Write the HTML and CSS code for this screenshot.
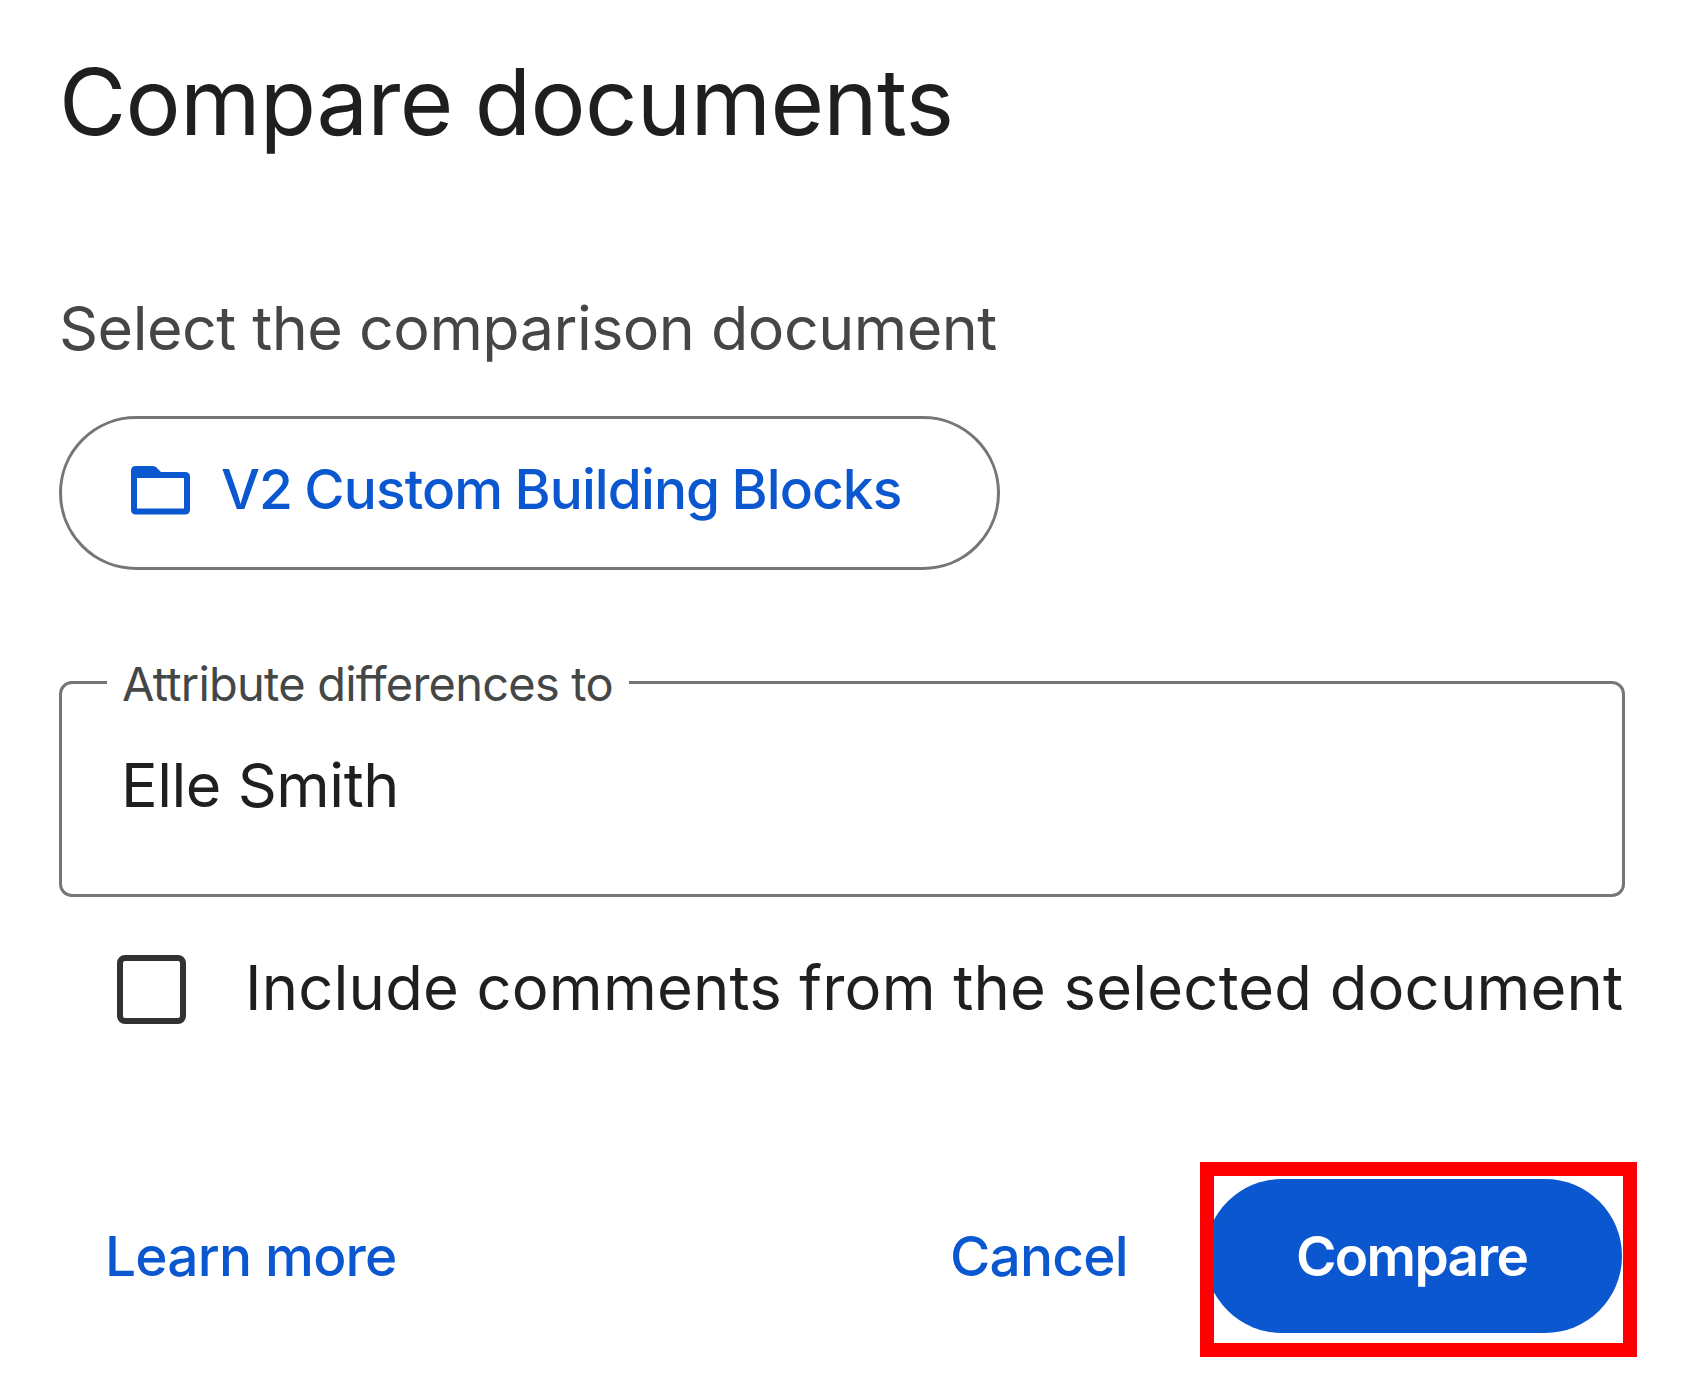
FILE: index.html
```html
<!DOCTYPE html>
<html lang="en">
<head>
<meta charset="utf-8">
<title>Compare documents</title>
<link rel="stylesheet" href="styles.css">
</head>
<body>
<main class="dialog">
  <h1 class="title">Compare documents</h1>
  <p class="prompt">Select the comparison document</p>
  <button class="picker" type="button">
    <svg class="folder" viewBox="0 0 59 49" aria-hidden="true">
      <path fill="currentColor" fill-rule="evenodd" d="M5 0H22Q24 0 25.500 1.500L30 6H54Q59 6 59 11V43.500Q59 48.500 54 48.500H5Q0 48.500 0 43.500V5Q0 0 5 0ZM6 12V42.500H53V12Z"/>
    </svg>
    <span class="picker-name">V2 Custom Building Blocks</span>
  </button>
  <fieldset class="field">
    <legend class="field-label">Attribute differences to</legend>
    <div class="field-value">Elle Smith</div>
  </fieldset>
  <div class="option">
    <span class="checkbox" role="checkbox" aria-checked="false" aria-label="Include comments"></span>
    <span class="option-text">Include comments from the selected document</span>
  </div>
  <footer class="actions">
    <a class="link learn">Learn more</a>
    <a class="link cancel">Cancel</a>
    <div class="highlight">
      <button class="submit" type="button">Compare</button>
    </div>
  </footer>
</main>
</body>
</html>
```
FILE: styles.css
```css
* {
  box-sizing: border-box;
}

body {
  margin: 0;
  background: #fff;
  color: #1f1f1f;
  font-family: Inter, "Liberation Sans", sans-serif;
}

.dialog {
  display: flex;
  flex-direction: column;
  align-items: flex-start;
  width: 1684px;
  height: 1385px;
  padding: 46px 0 0 59px;
  overflow: hidden;
  white-space: nowrap;
}

.title {
  margin: 0;
  font-size: 92px;
  font-weight: 400;
  line-height: 112px;
  letter-spacing: -0.7px;
  word-spacing: -3px;
}

.prompt {
  margin: 134px 0 0;
  color: #444746;
  font-size: 61px;
  line-height: 72px;
  letter-spacing: -0.52px;
}

.picker {
  display: flex;
  align-items: center;
  gap: 31px;
  width: 941px;
  height: 154px;
  margin: 52px 0 0;
  padding: 0 0 8px 69px;
  border: 3px solid #747775;
  border-radius: 77px;
  background: #fff;
  color: #0b57d0;
  font: 500 55px/66px Inter, "Liberation Sans", sans-serif;
  letter-spacing: -0.9px;
  word-spacing: -1.500px;
}

.folder {
  flex: none;
  width: 59px;
  height: 49px;
  margin-top: 3px;
}

.field {
  width: 1566px;
  height: 240px;
  margin: 87px 0 0;
  padding: 41px 0 0 45px;
  border: 3px solid #747775;
  border-radius: 13px;
}

.field-label {
  width: 522px;
  padding: 3px 0 0 15px;
  color: #444746;
  font-size: 47px;
  line-height: 48px;
  letter-spacing: -0.78px;
}

.field-value {
  padding-left: 14px;
  font-size: 61px;
  line-height: 72px;
  letter-spacing: -0.45px;
}

.option {
  display: flex;
  align-items: center;
  gap: 59px;
  margin: 55px 0 0 58px;
}

.checkbox {
  width: 69px;
  height: 69px;
  margin-top: 3px;
  border: 6.5px solid #303332;
  border-radius: 8px;
}

.option-text {
  font-size: 61.5px;
  line-height: 72px;
  letter-spacing: 0.18px;
}

.actions {
  display: flex;
  align-items: center;
  width: 1578px;
  margin-top: 138px;
  padding-left: 46px;
}

.link {
  padding-bottom: 8px;
  color: #0b57d0;
  font-size: 55px;
  font-weight: 500;
  line-height: 66px;
  letter-spacing: -0.8px;
}

.cancel {
  width: 250px;
  margin-left: auto;
}

.highlight {
  width: 437px;
  height: 195px;
  padding-top: 3px;
  border: 14px solid #f00;
  overflow: hidden;
}

.submit {
  display: block;
  width: 417px;
  height: 154px;
  margin-left: -9px;
  padding: 0 0 1px 91px;
  border: 0;
  border-radius: 77px;
  background: #0b57d0;
  color: #fff;
  font: 600 55px/66px Inter, "Liberation Sans", sans-serif;
  letter-spacing: -1.7px;
  text-align: left;
}
```
